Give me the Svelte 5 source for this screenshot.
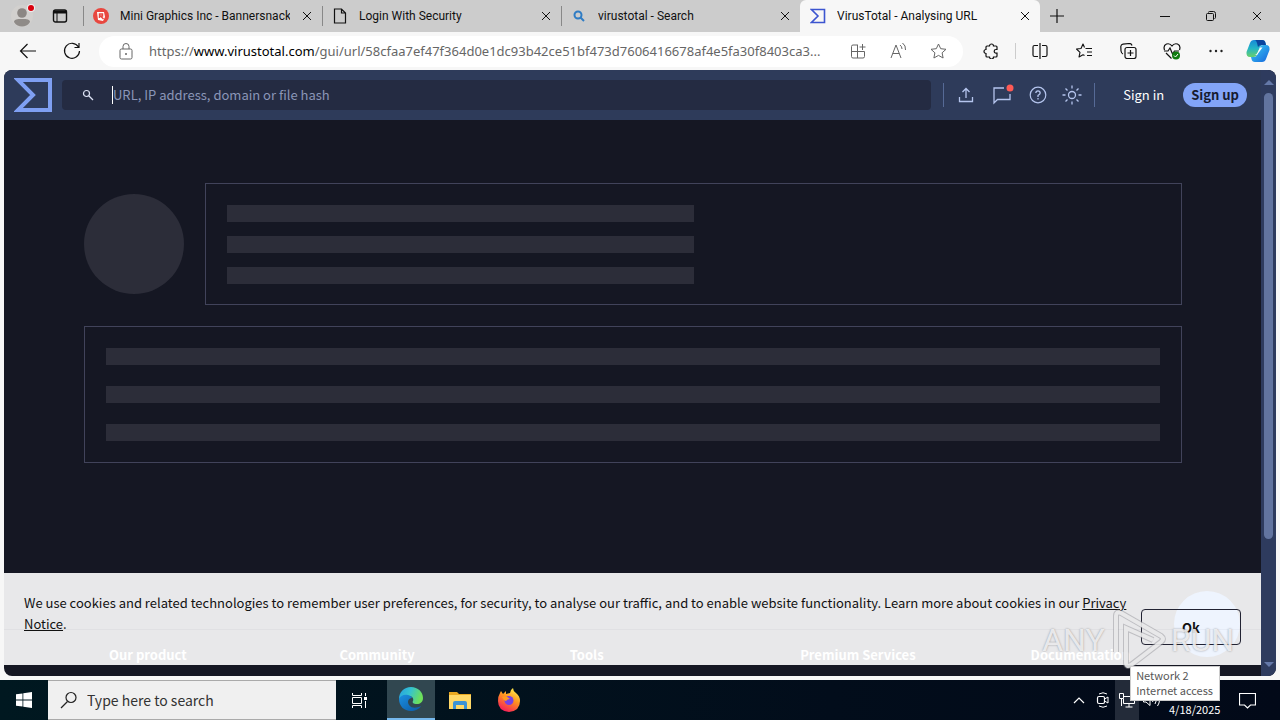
<script>
  const tabs = [
    { title: 'Mini Graphics Inc - Bannersnack', icon: 'banner' },
    { title: 'Login With Security', icon: 'page' },
    { title: 'virustotal - Search', icon: 'search' },
    { title: 'VirusTotal - Analysing URL', icon: 'sigma', active: true }
  ];
  const footer = ['Our product', 'Community', 'Tools', 'Premium Services', 'Documentation'];
</script>

{#snippet cross()}
  <svg width="10" height="10" viewBox="0 0 10 10"><path d="M1 1l8 8M9 1l-8 8" /></svg>
{/snippet}

<div class="screen">
  <header class="strip">
    <button class="avatar" aria-label="Profile">
      <svg width="26" height="24" viewBox="0 0 26 24">
        <g stroke="none">
          <circle cx="12" cy="12" r="11" fill="#d2d0ce" />
          <circle cx="12" cy="9" r="4.800" fill="#8b8683" />
          <path d="M4 18c0-2.500 3-3 8-3s8 .5 8 3c-2 3.500-5 4.500-8 4.500s-6-1-8-4.500z" fill="#8f8b88" />
          <circle cx="21" cy="4" r="4" fill="#eee" /><circle cx="21" cy="4" r="3" fill="#d9000d" />
        </g>
      </svg>
    </button>
    <button class="workspace" aria-label="Tab actions">
      <svg width="16" height="16" viewBox="0 0 16 16"><rect x="1.500" y="2" width="13" height="12" rx="2" stroke-width="1.400" /><path d="M2 3h12v2H2z" fill="#111" /><path d="M5 5v9" /></svg>
    </button>
    {#each tabs as tab}
      <div class="tab" class:active={tab.active}>
        <span class="fav">
          {#if tab.icon === 'banner'}
            <svg width="16" height="16" viewBox="0 0 16 16"><circle cx="8" cy="8" r="8" fill="#e8473f" stroke="none" /><path d="M4 4h7l1 5-2 4-5-1z" fill="#fff" stroke="none" /><path d="M6.500 10V6h3v2h-2l3 3" stroke="#e8473f" stroke-width="1.500" /></svg>
          {:else if tab.icon === 'page'}
            <svg width="14" height="16" viewBox="0 0 14 16"><path d="M1.500 1h7L12.500 5v10h-11zM8.500 1v4h4" stroke-width="1.200" /></svg>
          {:else if tab.icon === 'search'}
            <svg width="14" height="14" viewBox="0 0 14 14"><circle cx="6" cy="6" r="3.500" stroke="#2f7cc4" stroke-width="2" /><path d="M8.500 8.500l3.500 3.500" stroke="#2f7cc4" stroke-width="2" /></svg>
          {:else}
            <svg width="16" height="16" viewBox="0 0 16 16"><path d="M1.500 1.500h13v13h-13L8 8z" stroke="#3c55d0" stroke-width="1.600" /></svg>
          {/if}
        </span>
        <span class="title">{tab.title}</span>
        <button class="close" aria-label="Close tab">{@render cross()}</button>
      </div>
    {/each}
    <button class="newtab" aria-label="New tab"><svg width="14" height="14" viewBox="0 0 14 14"><path d="M7 0v14M0 7h14" stroke-width="1.200" /></svg></button>
    <div class="winctl">
      <button aria-label="Minimise"><svg width="10" height="10" viewBox="0 0 10 10"><path d="M0 5.500h10" /></svg></button>
      <button aria-label="Restore"><svg width="10" height="10" viewBox="0 0 10 10"><rect x=".5" y="2.500" width="7" height="7" rx="1" /><path d="M2.500 1.500q0-1 1-1h4q2 0 2 2v4q0 1-1 1" /></svg></button>
      <button aria-label="Close">{@render cross()}</button>
    </div>
  </header>

  <nav class="toolbar">
    <button class="nav" aria-label="Back"><svg width="18" height="16" viewBox="0 0 18 16"><path d="M17 8H1.500M8.500 1l-7 7 7 7" stroke-width="1.200" /></svg></button>
    <button class="nav" aria-label="Refresh"><svg width="18" height="18" viewBox="0 0 18 18"><path d="M15.500 5A7.500 7.500 0 1 0 16.500 9M16 1v4.500h-4.500" stroke-width="1.200" /></svg></button>
    <div class="address">
      <svg width="14" height="17" viewBox="0 0 14 17"><rect x="1" y="6" width="12" height="10" rx="1.500" stroke="#666" /><path d="M4 6V3.500a3 3 0 0 1 6 0V6" stroke="#666" /><circle cx="7" cy="11" r="1" fill="#666" stroke="none" /></svg>
      <a class="url" href="#top">https://<b>www.virustotal.com</b>/gui/url/58cfaa7ef47f364d0e1dc93b42ce51bf473d7606416678af4e5fa30f8403ca3...</a>
      <button aria-label="Install app"><svg width="16" height="16" viewBox="0 0 16 16"><path d="M8 2H3q-1.500 0-1.500 1.500v10Q1.500 15 3 15h10q1.500 0 1.500-1.500V8.500h-13M7.500 2v13M12.500 1v6M9.500 4h6" /></svg></button>
      <button aria-label="Read aloud"><svg width="17" height="16" viewBox="0 0 17 16"><path d="M1 15L6 2l5 13M2.700 10.500h6.600M10 2q2 1.500 2 4M12.500 0Q16 2.500 15.500 7" /></svg></button>
      <button aria-label="Favourite"><svg width="17" height="16" viewBox="0 0 17 16"><path d="M8.500 1l2.200 4.700 5.300.6-3.900 3.500 1 5.200-4.600-2.600L3.900 15l1-5.200L1 6.300l5.300-.6z" stroke-linejoin="round" /></svg></button>
    </div>
    <div class="tools">
      <button aria-label="Extensions"><svg width="16" height="16" viewBox="0 0 16 16"><path d="M4 3h2.500a2 2 0 0 1 4 0H13q1 0 1 1v2.500h-1a1.800 1.800 0 0 0 0 3.600h1V13q0 1-1 1h-2.500a2 2 0 0 1-4 0H4q-1 0-1-1v-2.500a2 2 0 0 1 0-4V4q0-1 1-1z" stroke-width="1.200" /></svg></button>
      <i></i>
      <button aria-label="Split screen"><svg width="16" height="16" viewBox="0 0 16 16"><path d="M6 2.500H2.500q-1.500 0-1.500 1.500v8q0 1.500 1.500 1.500H6M10 2.500h3.500q1.500 0 1.500 1.500v8q0 1.500-1.500 1.500H10M8 0v16" stroke-width="1.200" /></svg></button>
      <button aria-label="Favourites"><svg width="17" height="16" viewBox="0 0 17 16"><path d="M9.500 5.500H16M11 9h5M11 12.500h5M8.500 4.500L7 1 5 5.500l-4.500.5L4 9.300 3 14l4-2.200 1.500.8" stroke-width="1.100" stroke-linejoin="round" /></svg></button>
      <button aria-label="Collections"><svg width="17" height="16" viewBox="0 0 17 16"><rect x="5" y="4.500" width="11" height="11" rx="2" stroke-width="1.200" /><path d="M10.500 7v6M7.500 10h6M3 11Q1.500 10.500 1 8L.8 3.500Q1 1.500 3 1.200L9.500.5q2 0 2.500 2" stroke-width="1.200" /></svg></button>
      <button aria-label="Browser essentials"><svg width="18" height="17" viewBox="0 0 18 17"><path d="M1.500 7Q0 2.500 3.500 1 7 0 9 3q2-3 5.500-2Q18 2.500 16.500 7M1 8h4l2-3 2.500 6L11.500 8H16M3 10l5.500 5.500" stroke-width="1.200" /><circle cx="13" cy="12.500" r="4" fill="#107c10" stroke="none" /><path d="M11 12.500l1.500 1.500 2.500-3" stroke="#fff" /></svg></button>
      <button aria-label="More"><svg width="16" height="16" viewBox="0 0 16 16"><g fill="#222" stroke="none"><circle cx="2.500" cy="8" r="1.200" /><circle cx="8" cy="8" r="1.200" /><circle cx="13.500" cy="8" r="1.200" /></g></svg></button>
    </div>
    <button class="copilot" aria-label="Copilot">
      <svg width="24" height="24" viewBox="0 0 24 24">
        <defs>
          <linearGradient id="ca" x1="0" y1="0" x2="0" y2="1"><stop offset="0" stop-color="#1689d8" /><stop offset=".5" stop-color="#24b5c5" /><stop offset="1" stop-color="#69d06b" /></linearGradient>
          <linearGradient id="cb" x1="0" y1="0" x2="1" y2="1"><stop offset="0" stop-color="#3ad1f5" /><stop offset="1" stop-color="#1664dd" /></linearGradient>
        </defs>
        <path d="M8 1h8q3 0 3.500 3L20 6h-3q-2.500 0-3.500 3l-2 6q-1 3-4 3H4q-4 0-3.500-5L4 4q1-3 4-3z" fill="url(#ca)" stroke="none" />
        <path d="M9 1h7q3 0 3.500 3L20 6h-4q-3 0-4 2L11 4Q10 1 9 1z" fill="#0b459e" stroke="none" />
        <path d="M16 23H9q-3 0-3.500-3L5 18h3q2.500 0 3.500-3l2-6q1-3 4-3H20q4 0 3.500 5L20 20q-1 3-4 3z" fill="url(#cb)" stroke="none" />
        <path d="M14 8.500h2.500L11 16H8.500q2 0 3-2.500z" fill="#fff" stroke="none" />
      </svg>
    </button>
  </nav>

  <main class="page" id="top">
    <div class="content">
      <div class="vt">
        <a class="logo" href="#top" aria-label="VirusTotal"><svg width="38" height="34" viewBox="0 0 38 34"><path d="M4 2h32v30H4l15-15z" stroke="#7f9ff2" stroke-width="4" /></svg></a>
        <label class="search">
          <svg width="12" height="12" viewBox="0 0 12 12"><circle cx="4.500" cy="4.500" r="3" stroke="#dde3f5" stroke-width="1.200" /><path d="M7 7l4 4" stroke="#dde3f5" stroke-width="1.300" /></svg>
          <span class="caret"></span>
          <input type="text" aria-label="Search" placeholder="URL, IP address, domain or file hash" />
        </label>
        <div class="actions">
          <button aria-label="Upload"><svg width="16" height="16" viewBox="0 0 16 16"><path d="M8 11V2M4.500 5L8 1.500 11.500 5M1.500 10v4.500h13V10" stroke-width="1.300" /></svg></button>
          <button aria-label="Notifications"><svg width="24" height="22" viewBox="0 0 24 22"><path d="M14 4H4v15l3.500-3.500H20V10" stroke-width="1.300" /><circle cx="20" cy="4" r="3.500" fill="#ff5a55" stroke="none" /></svg></button>
          <button aria-label="Help"><svg width="18" height="18" viewBox="0 0 18 18"><circle cx="9" cy="9" r="7.800" stroke-width="1.200" /><path d="M6.800 7Q7 4.800 9 4.800T11.200 7Q11.200 8 9 9.500V11M9 12v1.400" stroke-width="1.300" /></svg></button>
          <button aria-label="Theme"><svg width="20" height="20" viewBox="0 0 20 20"><circle cx="10" cy="10" r="3.500" stroke-width="1.300" /><path d="M10 .5v3M10 16.500v3M.5 10h3M16.500 10h3M3.500 3.500l2 2M14.500 14.500l2 2M16.500 3.500l-2 2M5.500 14.500l-2 2" stroke-width="1.300" /></svg></button>
        </div>
        <a class="signin" href="#top">Sign in</a>
        <a class="signup" href="#top">Sign up</a>
      </div>

      <div class="body">
        <div class="summary">
          <div class="disc"></div>
          <div class="card short"><span></span><span></span><span></span></div>
        </div>
        <div class="card long"><span></span><span></span><span></span></div>
      </div>

      <div class="cookie">
        <p>We use cookies and related technologies to remember user preferences, for security, to analyse our traffic, and to enable website functionality. Learn more about cookies in our <a href="#top">Privacy Notice</a>.</p>
        <div class="halo"></div>
        <button>Ok</button>
      </div>
      <footer>{#each footer as item}<strong>{item}</strong>{/each}</footer>
    </div>
    <div class="scroll"><i class="up"></i><div class="thumb"></div><i class="down"></i></div>
  </main>

  <div class="taskbar">
    <button class="start" aria-label="Start"><svg width="16" height="16" viewBox="0 0 16 16"><path d="M0 2.300L6.500 1.400v6.100H0zM7.300 1.300L16 0v7.500H7.300zM0 8.400h6.500v6.200L0 13.700zM7.300 8.400H16V16l-8.700-1.200z" fill="#fff" stroke="none" /></svg></button>
    <label class="find">
      <svg width="18" height="18" viewBox="0 0 18 18"><circle cx="11" cy="6.500" r="5" stroke="#222" stroke-width="1.200" /><path d="M7.500 10.500L1 17" stroke="#222" stroke-width="1.300" /></svg>
      <input type="text" aria-label="Windows search" placeholder="Type here to search" />
    </label>
    <button class="app view" aria-label="Task view"><svg width="17" height="17" viewBox="0 0 17 17"><path d="M1.500 1v2.500h9V1M1.500 16v-2.500h9V16M1.500 5.500h9v6h-9zM14.500 1v3M14.500 9v7" stroke="#fff" /><path d="M13 5h3v3h-3z" fill="#fff" stroke="none" /></svg></button>
    <button class="app current" aria-label="Edge">
      <svg width="24" height="24" viewBox="0 0 24 24">
        <defs>
          <linearGradient id="ea" x1="0" y1="0" x2="1" y2=".3"><stop offset="0" stop-color="#249fe0" /><stop offset=".5" stop-color="#35c3d0" /><stop offset="1" stop-color="#6de05a" /></linearGradient>
          <linearGradient id="eb" x1="0" y1="0" x2="1" y2="1"><stop offset="0" stop-color="#1b8fe0" /><stop offset="1" stop-color="#0c59a4" /></linearGradient>
        </defs>
        <path d="M0 12C0 5 5 0 12 0s12 5 12 11c0 4-3 6-6 6-4 0-5-1.500-4-3 1-2-.5-5-4-5-5 0-9 3-10 3z" fill="url(#ea)" stroke="none" />
        <path d="M0 12c1-3 5-5 9-4 2 .5 4 2 4 3-4 0-5 4-3 7 3 4 8 3 12 1-2 3.500-6 5-10 5C5 24 0 19 0 12z" fill="url(#eb)" stroke="none" />
      </svg>
    </button>
    <button class="app" aria-label="File Explorer"><svg width="22" height="19" viewBox="0 0 22 19"><path d="M0 1h8l2 2h12v15H0z" fill="#e9a820" stroke="none" /><path d="M0 4h22v14H0z" fill="#ffd867" stroke="none" /><path d="M4 18v-6q0-2 2-2h10q2 0 2 2v6h-3v-4H7v4z" fill="#3b93d6" stroke="none" /></svg></button>
    <button class="app" aria-label="Firefox">
      <svg width="24" height="24" viewBox="0 0 24 24">
        <defs><linearGradient id="ff" x1=".8" y1="0" x2=".3" y2="1"><stop offset="0" stop-color="#fff44f" /><stop offset=".45" stop-color="#ff9420" /><stop offset="1" stop-color="#f5195b" /></linearGradient></defs>
        <path d="M3 5l1-2 2 3 3-3v3l4-1q0-3 3-5 0 3 3 5 4 3 4 8 0 10-11 11Q1 23 1 13q0-5 2-8z" fill="url(#ff)" stroke="none" />
        <circle cx="12" cy="12.500" r="4.500" fill="#7542e5" stroke="none" />
        <path d="M5 9q4-2 8 2-3 0-4 2-2 0-4-4z" fill="#ff9a20" stroke="none" />
      </svg>
    </button>
    <div class="tray">
      <button aria-label="Hidden icons"><svg width="12" height="8" viewBox="0 0 12 8"><path d="M1 7l5-5 5 5" stroke-width="1.200" /></svg></button>
      <button aria-label="Meet now"><svg width="14" height="16" viewBox="0 0 14 16"><rect x="1.500" y="4.500" width="7" height="7" rx="1.500" stroke-width="1.200" /><path d="M8.500 7L12 5v6L8.500 9M3 2q4-2.500 8 0M3 14q4 2.500 8 0" /></svg></button>
      <button class="hot" aria-label="Network"><svg width="16" height="16" viewBox="0 0 16 16"><path d="M5 4.500h10.500v7H4.500V7M10 11.500V15M6.500 15h7M.5 1.500h4v5h-4zM2.500 6.500V14" /></svg></button>
      <button aria-label="Volume"><svg width="17" height="14" viewBox="0 0 17 14"><path d="M.5 5H3l4-3.500v11L3 9H.5zM9.500 5q1.500 2 0 4M12 3q3 4 0 8M14.500 1q4 6 0 12" /></svg></button>
      <span class="date">4/18/2025</span>
      <button class="notes" aria-label="Notifications"><svg width="17" height="17" viewBox="0 0 17 17"><path d="M.5 1.500h16v11.500h-5l-3 3-3-3h-5z" stroke-width="1.200" /></svg></button>
    </div>
  </div>

  <div class="mark">
    <span>ANY</span>
    <svg width="60" height="64" viewBox="0 0 60 64"><path class="edge" d="M8 44V8q0-5 5-3l40 23q4 3 0 6L23 57q-5 3-5-3V20l27 12" /><path d="M8 44V8q0-5 5-3l40 23q4 3 0 6L23 57q-5 3-5-3V20l27 12" /></svg>
    <span>RUN</span>
  </div>
  <div class="tip" role="tooltip">Network 2<br />Internet access</div>
</div>

<style>
  :global(body) { margin: 0; }
  * { box-sizing: border-box; }
  svg { display: block; fill: none; stroke: currentColor; flex: none; }
  button { border: 0; padding: 0; background: none; color: inherit; font: inherit; display: flex; align-items: center; justify-content: center; flex: none; }
  a { color: inherit; text-decoration: none; }
  input { border: 0; outline: 0; padding: 0; background: none; font: inherit; min-width: 0; flex: 1; }
  .screen { position: relative; display: flex; flex-direction: column; min-height: 100vh; overflow: hidden; background: #f7f7f7; color: #111; font: 13px/20px "Noto Sans CJK SC", "Noto Sans", sans-serif; }

  .strip { display: flex; height: 32px; background: #ccc; align-items: stretch; font: 12px/16px Roboto, sans-serif; }
  .avatar { width: 44px; padding-left: 2px; }
  .workspace { width: 39px; padding-right: 8px; }
  .tab { display: flex; align-items: center; flex: 0 1 239px; min-width: 0; border-left: 1px solid #888; border-image: linear-gradient(transparent 20%, #888 20% 80%, transparent 80%) 1; padding: 0 8px; gap: 10px; }
  .tab.active { flex-basis: 240px; padding-left: 9px; background: #f7f7f7; border: 0; border-radius: 6px 6px 0 0; }
  .fav { width: 18px; display: flex; justify-content: center; flex: none; }
  .title { flex: 1; white-space: nowrap; overflow: hidden; }
  .tab .close { width: 14px; }
  .newtab { width: 34px; }
  .winctl { display: flex; margin-left: auto; }
  .winctl button { width: 46px; }

  .toolbar { display: flex; align-items: center; height: 38px; padding: 0 10px 0 6px; }
  .nav { width: 44px; height: 30px; }
  .address { display: flex; align-items: center; flex: 1; min-width: 0; height: 31px; margin-left: 5px; padding: 0 13px 0 20px; border-radius: 16px; background: #fff; color: #666; }
  .address button { width: 24px; margin-left: 16px; }
  .address .url + button { margin-left: 12px; }
  .url { flex: 1; min-width: 0; margin-left: 16px; font: 13px/20px "Noto Sans", "Open Sans", sans-serif; white-space: nowrap; overflow: hidden; }
  .url b { font-weight: 400; color: #000; }
  .tools { display: flex; align-items: center; margin-left: 12px; gap: 12px; }
  .tools button { width: 32px; }
  .tools i { width: 1px; height: 16px; background: #ccc; margin: 0 -4px; }
  .copilot { width: 24px; margin-left: 14px; }

  .page { display: flex; flex: 1; margin: 0 4px 4px; border-radius: 8px; overflow: hidden; background: #151723; }
  .content { position: relative; display: flex; flex-direction: column; flex: 1; min-width: 0; }
  .vt { display: flex; align-items: center; height: 50px; padding: 0 14px 0 10px; background: #2e3b5a; color: #b5c5ee; }
  .search { display: flex; align-items: center; flex: 1; height: 30px; margin-left: 10px; padding: 0 20px; border-radius: 4px; background: #242b42; }
  .search input { color: #fff; }
  .search input::placeholder { color: #8b96b8; opacity: 1; }
  .caret { width: 1px; height: 18px; margin-left: 18px; background: #fff; }
  .actions { display: flex; align-items: center; justify-content: space-between; width: 152px; height: 24px; margin-left: 12px; padding: 0 12px 0 14px; border: solid #566a96; border-width: 0 1px; }
  .signin { margin-left: 28px; color: #fff; }
  .signup { margin-left: 19px; padding: 2px 8px; border-radius: 12px; background: #83a5f8; color: #161b30; font-weight: 700; }
  .body { display: flex; flex-direction: column; gap: 21px; padding: 63px 79px 0 80px; }
  .summary { display: flex; align-items: center; gap: 21px; }
  .disc { width: 100px; height: 100px; border-radius: 50%; background: #2c2d39; }
  .card { display: flex; flex-direction: column; padding: 21px; border: 1px solid #41435a; }
  .card span { height: 17px; background: #2c2d39; }
  .short { flex: 1; gap: 14px; padding-bottom: 20px; }
  .short span { width: 50%; }
  .long { gap: 21px; }

  .cookie { display: flex; align-items: center; margin: auto 0 11px; height: 92px; padding: 0 20px; gap: 12px; background: #e8e8ea; line-height: 21px; }
  .cookie p { flex: 1; margin: 0; padding-bottom: 12px; }
  .cookie a { text-decoration: underline; }
  .cookie button { position: relative; width: 100px; height: 36px; margin-top: 16px; border: 1px solid #222333; border-radius: 4px; font-weight: 700; }
  .halo { position: absolute; right: 21px; bottom: 19px; width: 66px; height: 66px; border-radius: 50%; background: #eef4fe; }
  footer { position: absolute; left: 0; right: 0; bottom: 11px; padding: 15px 0 0 105px; border-top: 1px solid rgba(0, 0, 40, 0.03); display: grid; grid-template-columns: repeat(5, 1fr); color: #fff; pointer-events: none; }
  .scroll { display: flex; flex-direction: column; align-items: center; width: 15px; padding: 10px 0 9px; background: #2e3b5e; }
  .scroll i { border: 5px solid transparent; }
  .scroll .up { border-top: 0; border-bottom-color: #6478a8; }
  .scroll .down { border-bottom: 0; border-top-color: #6478a8; margin-top: auto; }
  .thumb { width: 9px; height: 76%; margin-top: 8px; border-radius: 5px; background: #62749f; }

  .taskbar { display: flex; height: 40px; color: #fff; background: linear-gradient(90deg, #001820, #020d1b 65%, #020918); }
  .start { width: 48px; }
  .find { display: flex; align-items: center; width: 288px; padding: 0 12px; gap: 9px; background: #f0f0f0; border: 1px solid #aaa; border-width: 1px 0; font-size: 14px; }
  .find input::placeholder { color: #333; opacity: 1; }
  .app { width: 49px; }
  .view { width: 51px; padding-right: 4px; }
  .current { width: 48px; background: #314750; border-bottom: 2px solid #76b9ed; }
  .tray { display: flex; margin-left: auto; padding-right: 17px; }
  .tray button { width: 24px; }
  .tray .hot { background: #232b39; }
  .date { align-self: flex-end; margin: 0 0 3px 6px; width: 53px; font-size: 11px; line-height: 16px; white-space: nowrap; }
  .tray .notes { width: 32px; margin-left: 9px; }

  .mark { position: absolute; right: 46px; bottom: 48px; display: flex; align-items: center; gap: 3px; color: rgba(246, 246, 248, 0.85); font: 32px/48px Roboto, sans-serif; text-shadow: 0 0 2px rgba(90, 90, 95, 0.6); pointer-events: none; }
  .mark path { stroke: rgba(238, 238, 240, 0.85); stroke-width: 4; }
  .mark .edge { stroke: rgba(150, 150, 155, 0.5); stroke-width: 6; }
  .tip { position: absolute; right: 60px; bottom: 19px; padding: 1px 6px 2px 5px; background: #fff; border: 1px solid #ccc; color: #575757; font-size: 11px; line-height: 15px; }
</style>
